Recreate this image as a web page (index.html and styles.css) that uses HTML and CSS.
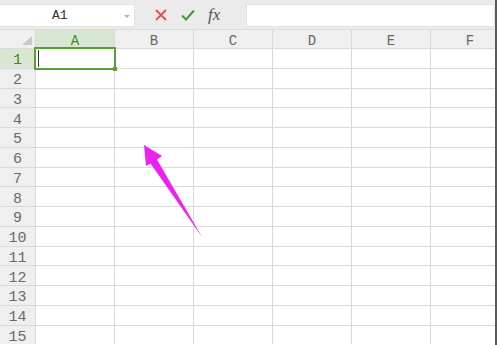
FILE: index.html
```html
<!DOCTYPE html>
<html>
<head>
<meta charset="utf-8">
<link rel="stylesheet" href="styles.css">
</head>
<body>
<div class="window">
  <div class="main">
    <div class="topbar">
      <div class="namebox">
        <span class="ref">A1</span>
        <span class="drop"></span>
      </div>
      <div class="tools">
        <svg class="ico" width="14" height="14" viewBox="0 0 14 14"><path d="M2 2 L12 12 M12 2 L2 12" stroke="#e0504f" stroke-width="1.8" fill="none"/></svg>
        <svg class="ico" width="16" height="14" viewBox="0 0 16 14"><path d="M2 7.5 L6 11.5 L14 2.5" stroke="#3f9a3a" stroke-width="2" fill="none"/></svg>
        <span class="fx">fx</span>
      </div>
      <div class="formula"></div>
    </div>
    <div class="grid">
      <div class="corner"><span class="tri"></span></div>
      <div class="ch active">A</div>
      <div class="ch">B</div>
      <div class="ch">C</div>
      <div class="ch">D</div>
      <div class="ch">E</div>
      <div class="ch">F</div>

      <div class="rh active">1</div><div class="c sel"><span class="caret"></span><span class="handle"></span></div><div class="c"></div><div class="c"></div><div class="c"></div><div class="c"></div><div class="c"></div>
      <div class="rh">2</div><div class="c"></div><div class="c"></div><div class="c"></div><div class="c"></div><div class="c"></div><div class="c"></div>
      <div class="rh">3</div><div class="c"></div><div class="c"></div><div class="c"></div><div class="c"></div><div class="c"></div><div class="c"></div>
      <div class="rh">4</div><div class="c"></div><div class="c"></div><div class="c"></div><div class="c"></div><div class="c"></div><div class="c"></div>
      <div class="rh">5</div><div class="c"></div><div class="c"></div><div class="c"></div><div class="c"></div><div class="c"></div><div class="c"></div>
      <div class="rh">6</div><div class="c"></div><div class="c"></div><div class="c"></div><div class="c"></div><div class="c"></div><div class="c"></div>
      <div class="rh">7</div><div class="c"></div><div class="c"></div><div class="c"></div><div class="c"></div><div class="c"></div><div class="c"></div>
      <div class="rh">8</div><div class="c"></div><div class="c"></div><div class="c"></div><div class="c"></div><div class="c"></div><div class="c"></div>
      <div class="rh">9</div><div class="c"></div><div class="c"></div><div class="c"></div><div class="c"></div><div class="c"></div><div class="c"></div>
      <div class="rh">10</div><div class="c"></div><div class="c"></div><div class="c"></div><div class="c"></div><div class="c"></div><div class="c"></div>
      <div class="rh">11</div><div class="c"></div><div class="c"></div><div class="c"></div><div class="c"></div><div class="c"></div><div class="c"></div>
      <div class="rh">12</div><div class="c"></div><div class="c"></div><div class="c"></div><div class="c"></div><div class="c"></div><div class="c"></div>
      <div class="rh">13</div><div class="c"></div><div class="c"></div><div class="c"></div><div class="c"></div><div class="c"></div><div class="c"></div>
      <div class="rh">14</div><div class="c"></div><div class="c"></div><div class="c"></div><div class="c"></div><div class="c"></div><div class="c"></div>
      <div class="rh">15</div><div class="c"></div><div class="c"></div><div class="c"></div><div class="c"></div><div class="c"></div><div class="c"></div>
    </div>
  </div>
  <div class="edge"></div>
  <svg class="arrow" width="497" height="345" viewBox="0 0 497 345">
    <polygon points="144,145 162,156 157,159.5 202,237 150.5,163.5 146,166" fill="#ee22ee"/>
  </svg>
</div>
</body>
</html>
```

FILE: styles.css
```css
html, body {
  margin: 0;
  padding: 0;
  background: #ffffff;
}
.window {
  position: relative;
  width: 497px;
  height: 345px;
  overflow: hidden;
  display: flex;
}
.main {
  width: 495px;
  height: 345px;
  overflow: hidden;
  display: flex;
  flex-direction: column;
}
.edge {
  width: 2px;
  height: 345px;
  background: #5a5a5a;
}
.topbar {
  flex-shrink: 0;
  height: 30px;
  box-sizing: border-box;
  background: #ebebeb;
  display: flex;
  align-items: center;
  border-bottom: 1px solid #dcdcdc;
}
.namebox {
  width: 135px;
  height: 23px;
  margin-top: 1px;
  background: #ffffff;
  box-sizing: border-box;
  border: 1px solid #e2e2e2;
  border-left: none;
  display: flex;
  align-items: center;
  position: relative;
}
.ref {
  font-family: "Liberation Mono", monospace;
  font-size: 13px;
  color: #333;
  margin-left: 52px;
}
.drop {
  position: absolute;
  right: 4px;
  top: 10px;
  width: 0;
  height: 0;
  border-left: 3px solid transparent;
  border-right: 3px solid transparent;
  border-top: 3px solid #b5b5b5;
}
.tools {
  width: 111px;
  display: flex;
  align-items: center;
  padding-left: 19px;
  box-sizing: border-box;
  gap: 12px;
}
.ico {
  display: block;
}
.fx {
  font-family: "Liberation Serif", serif;
  font-style: italic;
  font-size: 17px;
  color: #555;
  line-height: 1;
}
.formula {
  flex: 1;
  height: 23px;
  margin-top: 1px;
  background: #ffffff;
  box-sizing: border-box;
  border: 1px solid #e2e2e2;
}
.grid {
  flex-shrink: 0;
  display: grid;
  grid-template-columns: 35px repeat(6, 78px);
  grid-template-rows: 18px;
  grid-auto-rows: 18.75px;
  gap: 1px;
  background: #d9d9d9;
  width: 520px;
}
.corner {
  background: #efefef;
  position: relative;
}
.tri {
  position: absolute;
  right: 3px;
  bottom: 3px;
  width: 0;
  height: 0;
  border-left: 10px solid transparent;
  border-bottom: 9px solid #c9c9c9;
}
.ch {
  background: #efefef;
  font-family: "Liberation Mono", monospace;
  font-size: 14px;
  color: #666;
  display: flex;
  align-items: center;
  justify-content: center;
  padding-top: 3px;
}
.ch.active {
  background: #d9e7d2;
  color: #3d8b20;
}
.rh {
  background: #efefef;
  font-family: "Liberation Mono", monospace;
  font-size: 15px;
  color: #6a6a6a;
  display: flex;
  align-items: center;
  justify-content: center;
  padding-top: 5px;
}
.rh.active {
  background: #d9e7d2;
  color: #3d8b20;
}
.c {
  background: #ffffff;
}
.sel {
  position: relative;
  outline: 2px solid #5a9f34;
  outline-offset: 0;
  z-index: 1;
}
.caret {
  position: absolute;
  left: 2px;
  top: 1px;
  width: 1px;
  height: 17px;
  background: #333;
}
.handle {
  position: absolute;
  right: -3px;
  bottom: -3px;
  width: 4px;
  height: 4px;
  background: #5a9f34;
}
.arrow {
  position: absolute;
  left: 0;
  top: 0;
  pointer-events: none;
}
```
